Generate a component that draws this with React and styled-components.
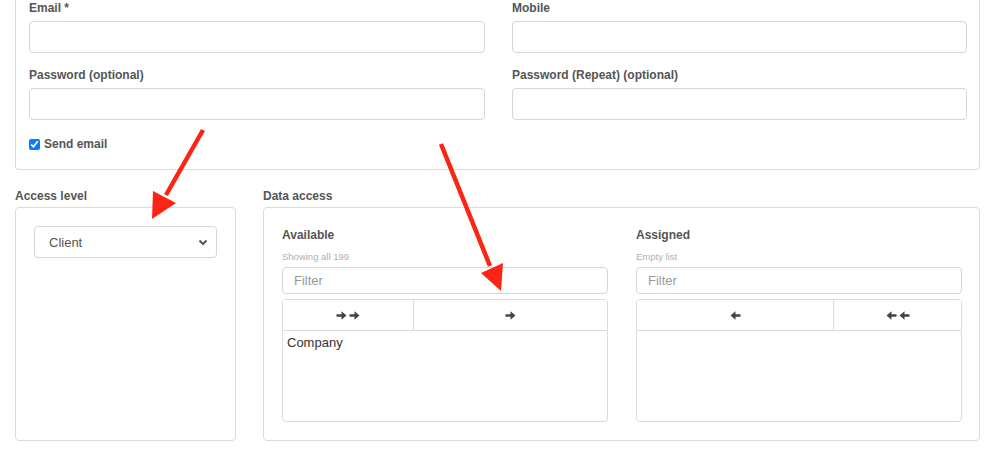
import React from 'react';
import styled, { createGlobalStyle } from 'styled-components';

const GlobalStyle = createGlobalStyle`
  body {
    margin: 0;
    background: #fff;
    font-family: "Liberation Sans", Arial, sans-serif;
  }
`;

// 페이지
const Page = styled.div`
  width: 996px;
  height: 451px;
  padding: 0 16px 0 15px;
  box-sizing: border-box;
  position: relative;
  overflow: hidden;
`;

// 상단 패널 (위쪽은 잘려 있음)
const TopPanel = styled.div`
  border: 1px solid #dcdcdc;
  border-top: none;
  border-radius: 0 0 4px 4px;
  padding: 0 12px 17px 13px;
`;

const FieldGrid = styled.div`
  display: grid;
  grid-template-columns: 456px 455px;
  column-gap: 27px;
  row-gap: 14px;
`;

const Field = styled.div`
  display: flex;
  flex-direction: column;
  gap: 5px;
`;

const Label = styled.label`
  display: block;
  font-size: 12px;
  line-height: 16px;
  font-weight: bold;
  color: #555;
`;

const TextInput = styled.input`
  height: 32px;
  box-sizing: border-box;
  border: 1px solid #d6d6d6;
  border-radius: 4px;
  outline: none;
  font: 13px "Liberation Sans", Arial, sans-serif;
`;

const CheckRow = styled.label`
  display: flex;
  align-items: center;
  gap: 4px;
  margin-top: 16px;
  font-size: 12px;
  line-height: 16px;
  font-weight: bold;
  color: #555;

  input {
    margin: 0;
    width: 11px;
    height: 11px;
    accent-color: #0a7cff;
  }
`;

// 하단 영역
const BottomGrid = styled.div`
  display: grid;
  grid-template-columns: 221px 717px;
  column-gap: 27px;
  margin-top: 18px;
`;

const Section = styled.div`
  display: flex;
  flex-direction: column;
  gap: 3px;
`;

const Box = styled.div`
  height: 234px;
  box-sizing: border-box;
  border: 1px solid #dcdcdc;
  border-radius: 4px;
  padding: ${p => p.$pad};
`;

const SelectWrap = styled.div`
  height: 32px;
  box-sizing: border-box;
  border: 1px solid #d6d6d6;
  border-radius: 4px;
  display: flex;
  align-items: center;
  padding: 0 8px 0 14px;
  justify-content: space-between;
  font-size: 13px;
  color: #555;
`;

const DualGrid = styled.div`
  display: grid;
  grid-template-columns: 326px 326px;
  column-gap: 28px;
`;

const ListCol = styled.div`
  display: flex;
  flex-direction: column;
`;

const Hint = styled.div`
  font-size: 9.5px;
  line-height: 11px;
  color: #b0b0b0;
  margin: 8px 0 5px;
`;

const FilterInput = styled.input`
  height: 27px;
  box-sizing: border-box;
  border: 1px solid #d6d6d6;
  border-radius: 4px;
  padding: 0 11px;
  outline: none;
  font: 13px "Liberation Sans", Arial, sans-serif;
  color: #555;

  &::placeholder {
    color: #9a9a9a;
  }
`;

const BtnGroup = styled.div`
  display: grid;
  grid-template-columns: ${p => p.$cols};
  margin-top: 5px;
  height: 31px;
  box-sizing: border-box;
  border: 1px solid #dcdcdc;
  border-bottom: none;
  border-radius: 4px 4px 0 0;
`;

const MoveBtn = styled.button`
  border: none;
  border-left: ${p => (p.$first ? 'none' : '1px solid #dcdcdc')};
  background: #fff;
  display: flex;
  align-items: center;
  justify-content: center;
  gap: 2px;
  padding: 0;
`;

const ItemList = styled.div`
  height: 92px;
  box-sizing: border-box;
  border: 1px solid #dcdcdc;
  border-radius: 0 0 4px 4px;
  padding: 3px 4px;
  font-size: 13px;
  line-height: 18px;
  color: #333;
`;

// 빨간 화살표 (주석)
const Annotation = styled.svg`
  position: absolute;
  left: 0;
  top: 0;
  pointer-events: none;
`;

const Chevron = () => (
  <svg width="10" height="7" viewBox="0 0 10 7">
    <path d="M1.5 1.5 L5 5 L8.5 1.5" fill="none" stroke="#555" strokeWidth="2" />
  </svg>
);

// 굵은 화살표 아이콘
const Arrow = ({ dir }) => (
  <svg
    width="11"
    height="9"
    viewBox="0 0 11 9"
    style={dir === 'left' ? { transform: 'scaleX(-1)' } : undefined}
  >
    <path d="M0.5 3.2 H5.5 V0.3 L10.5 4.5 L5.5 8.7 V5.8 H0.5 Z" fill="#444" />
  </svg>
);

const DualList = ({ title, hint, cols, buttons, items }) => (
  <ListCol>
    <Label>{title}</Label>
    <Hint>{hint}</Hint>
    <FilterInput placeholder="Filter" />
    <BtnGroup $cols={cols}>
      {buttons.map((b, i) => (
        <MoveBtn key={i} $first={i === 0}>
          {Array.from({ length: b.count }).map((_, j) => (
            <Arrow key={j} dir={b.dir} />
          ))}
        </MoveBtn>
      ))}
    </BtnGroup>
    <ItemList>
      {items.map(it => (
        <div key={it}>{it}</div>
      ))}
    </ItemList>
  </ListCol>
);

const App = () => (
  <Page>
    <GlobalStyle />
    <TopPanel>
      <FieldGrid>
        <Field>
          <Label>Email *</Label>
          <TextInput />
        </Field>
        <Field>
          <Label>Mobile</Label>
          <TextInput />
        </Field>
        <Field>
          <Label>Password (optional)</Label>
          <TextInput type="password" />
        </Field>
        <Field>
          <Label>Password (Repeat) (optional)</Label>
          <TextInput type="password" />
        </Field>
      </FieldGrid>
      <CheckRow>
        <input type="checkbox" defaultChecked />
        Send email
      </CheckRow>
    </TopPanel>

    <BottomGrid>
      <Section>
        <Label>Access level</Label>
        <Box $pad="18px">
          <SelectWrap>
            Client
            <Chevron />
          </SelectWrap>
        </Box>
      </Section>
      <Section>
        <Label>Data access</Label>
        <Box $pad="19px 17px 18px 18px">
          <DualGrid>
            <DualList
              title="Available"
              hint="Showing all 199"
              cols="130px 1fr"
              buttons={[{ dir: 'right', count: 2 }, { dir: 'right', count: 1 }]}
              items={['Company']}
            />
            <DualList
              title="Assigned"
              hint="Empty list"
              cols="1fr 128px"
              buttons={[{ dir: 'left', count: 1 }, { dir: 'left', count: 2 }]}
              items={[]}
            />
          </DualGrid>
        </Box>
      </Section>
    </BottomGrid>

    <Annotation width="996" height="451" viewBox="0 0 996 451">
      <g fill="#fb2415" stroke="#fb2415">
        <line x1="203" y1="130" x2="166" y2="195" strokeWidth="4.5" />
        <polygon points="152,219 153,191 176,203" stroke="none" />
        <line x1="441" y1="144" x2="490" y2="266" strokeWidth="4.5" />
        <polygon points="501,291 481,273 503,263" stroke="none" />
      </g>
    </Annotation>
  </Page>
);

export default App;
